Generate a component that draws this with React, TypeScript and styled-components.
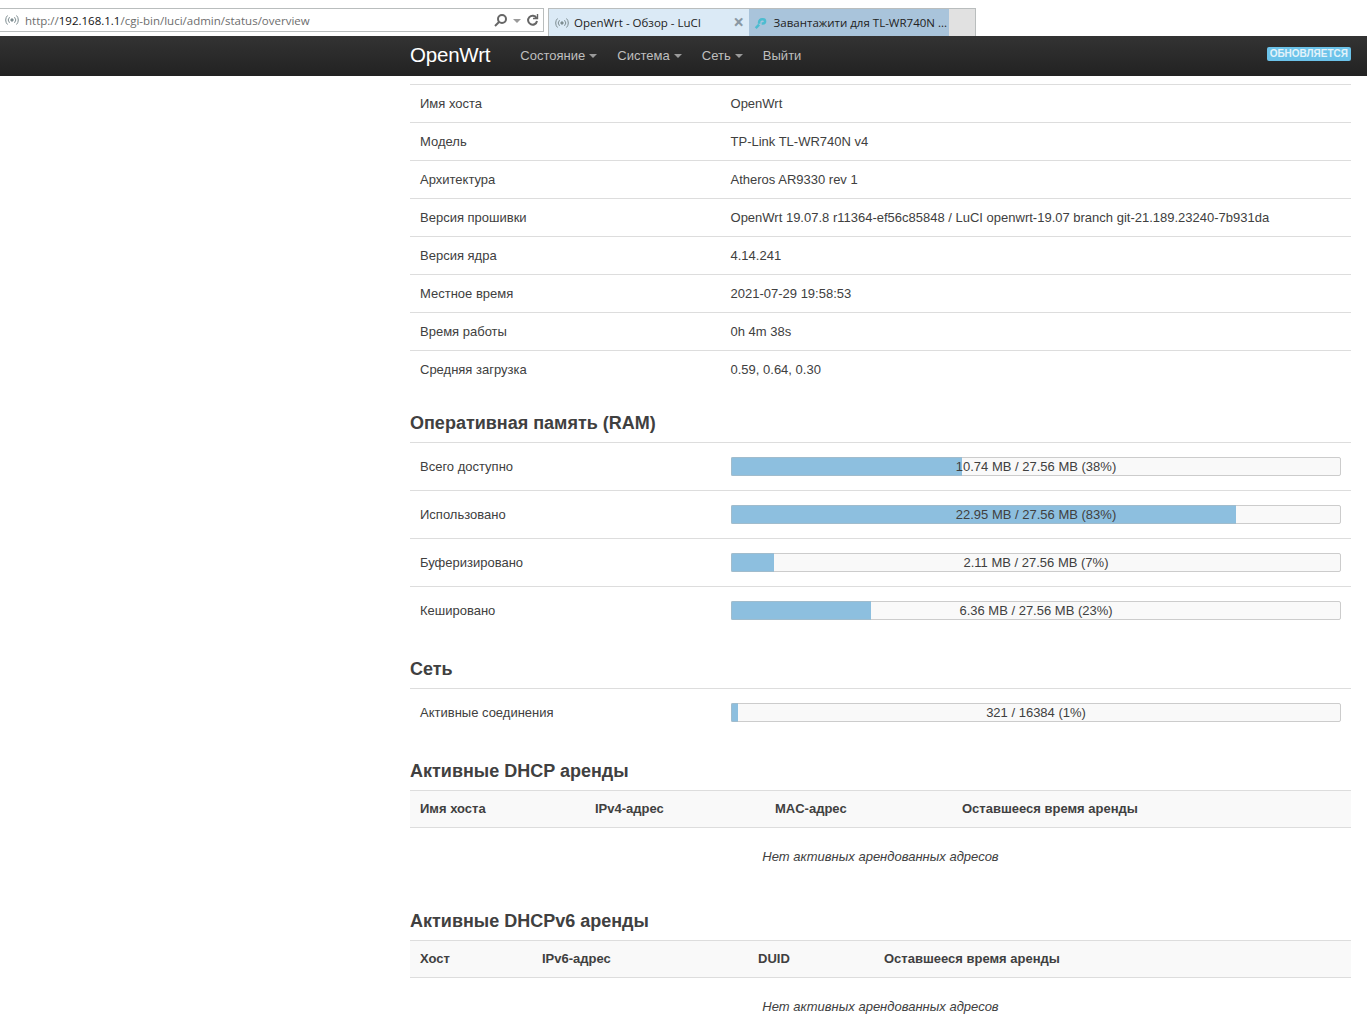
import React from "react";
import styled, { createGlobalStyle } from "styled-components";

const GlobalStyle = createGlobalStyle`
    html, body {
        margin: 0;
        padding: 0;
        background: #fff;
        overflow: hidden;
    }

    body {
        height: 1018px;
        color: #404040;
        font-family: "Liberation Sans", Arial, sans-serif;
        font-size: 13px;
    }

    * {
        box-sizing: border-box;
    }
`;

const ChromeBar = styled.div`
    height: 36px;
    display: flex;
    align-items: flex-end;
    background: #fff;
`;

const AddressBox = styled.div`
    width: 544px;
    height: 24px;
    margin-bottom: 4px;
    padding: 0 4px;
    display: flex;
    align-items: center;
    gap: 5px;
    border: 1px solid #b9bdbd;
    border-left: none;
    font-family: "Open Sans", sans-serif;
    font-size: 11.5px;
    color: #6d6d6d;
`;

const UrlHost = styled.span`
    color: #111;
`;

const Url = styled.div`
    flex: 1;
    white-space: nowrap;
`;

const AddressTools = styled.div`
    display: flex;
    align-items: center;
    gap: 5px;
    color: #666;
`;

const TabStrip = styled.div`
    margin-left: 4px;
    width: 428px;
    height: 28px;
    display: flex;
    background: #e1e1e1;
    border: 1px solid #b9bdbd;
    border-bottom: none;
`;

const Tab = styled.div<{ $active?: boolean }>`
    height: 100%;
    width: 200px;
    padding: 0 2px 0 5px;
    display: flex;
    align-items: center;
    gap: ${({ $active }) => ($active ? "4px" : "6px")};
    font-family: "Open Sans", sans-serif;
    font-size: 11.5px;
    white-space: nowrap;
    color: #222;
    background: ${({ $active }) => ($active ? "#dbeaf6" : "#a9c4db")};
`;

const TabTitle = styled.span`
    flex: 1;
`;

const CloseMark = styled.span`
    color: #8a98a3;
    font-size: 19px;
    font-weight: 700;
    line-height: 1;
    margin-right: 3px;
`;

const Navbar = styled.header`
    height: 40px;
    padding: 0 16px 2px 410px;
    display: flex;
    align-items: center;
    background: linear-gradient(#333, #222);
`;

const Brand = styled.a`
    color: #fff;
    font-size: 20.5px;
    margin-right: 30px;
    letter-spacing: -0.2px;
`;

const NavLink = styled.a`
    display: flex;
    align-items: center;
    gap: 4px;
    color: #bfbfbf;
    font-size: 13px;
    margin-right: 20px;
    letter-spacing: 0.02px;
`;

const Caret = styled.span`
    width: 0;
    height: 0;
    margin-top: 1px;
    border-left: 4px solid transparent;
    border-right: 4px solid transparent;
    border-top: 4px solid #9a9a9a;
`;

const Badge = styled.span`
    margin-left: auto;
    margin-top: -2px;
    padding: 1px 3px;
    background: #6cc3ea;
    border-radius: 2px;
    color: #e4f3fa;
    font-size: 10px;
    font-weight: 700;
    line-height: 12px;
`;

const Content = styled.main`
    padding: 8px 16px 0 410px;
`;

const Row = styled.div<{ $tall?: boolean }>`
    height: ${({ $tall }) => ($tall ? "48px" : "38px")};
    display: grid;
    grid-template-columns: 33% 1fr;
    align-items: center;
    border-top: 1px solid #ddd;
`;

const Label = styled.div`
    padding-left: 10px;
    color: #404040;
`;

const Value = styled.div`
    padding-left: 10px;
    color: #404040;
`;

const Section = styled.section`
    margin-top: 24px;
`;

const Heading = styled.h2`
    margin: 0;
    height: 30px;
    color: #404040;
    font-size: 18px;
    font-weight: 700;
    line-height: 22px;
`;

const BarValue = styled.div`
    padding: 0 10px 0 10.5px;
`;

const Progress = styled.div`
    position: relative;
    height: 19px;
    background: #f9f9f9;
    border: 1px solid #ccc;
    border-radius: 2px;
    text-align: center;
    line-height: 17px;
    color: #404040;
`;

const ProgressFill = styled.div`
    position: absolute;
    top: -1px;
    bottom: -1px;
    left: -1px;
    background: #8dbfdf;
    border: 1px solid #a0bccd;
    border-right: none;
    border-radius: 2px 0 0 2px;
`;

const ProgressText = styled.span`
    position: relative;
`;

const LeaseHead = styled.div<{ $columns: string }>`
    height: 38px;
    padding: 0 0 2px 10px;
    display: grid;
    grid-template-columns: ${({ $columns }) => $columns};
    align-items: center;
    background: #f9f9f9;
    border-top: 1px solid #ddd;
    border-bottom: 1px solid #ddd;
    font-weight: 700;
    color: #404040;
`;

const EmptyNote = styled.div`
    height: 58px;
    padding-bottom: 2px;
    display: flex;
    align-items: center;
    justify-content: center;
    font-style: italic;
    color: #404040;
`;

const SignalIcon = ({ color }: { color: string }) => (
    <svg width="16" height="16" viewBox="0 0 16 16" fill="none" stroke={color} strokeWidth="1">
        <circle cx="8" cy="8" r="1.2" fill={color} />
        <path d="M5.5 5.2a4 4 0 0 0 0 5.6M10.5 5.2a4 4 0 0 1 0 5.6" />
        <path d="M3.5 3.5a6.5 6.5 0 0 0 0 9M12.5 3.5a6.5 6.5 0 0 1 0 9" />
    </svg>
);

const SearchIcon = () => (
    <svg width="15" height="15" viewBox="0 0 15 15" fill="none" stroke="#666" strokeWidth="2">
        <circle cx="9" cy="6" r="4" />
        <path d="M6 9l-4 4" />
    </svg>
);

const ReloadIcon = () => (
    <svg width="13" height="14" viewBox="0 0 13 14" fill="none" stroke="#666" strokeWidth="2">
        <path d="M10.5 5a4.5 4.5 0 1 0 .5 3" />
        <path d="M11.5 1v4.5H7" strokeWidth="1.4" />
    </svg>
);

const TpLinkIcon = () => (
    <svg width="16" height="16" viewBox="0 0 16 16" fill="none" stroke="#4dbcd0" strokeWidth="3">
        <path d="M2 14l4-4M6 9l0-2a3.5 3.5 0 0 1 3.5-3.5h1a2.5 2.5 0 0 1 0 5H9" />
    </svg>
);

const systemInfo = [
    ["Имя хоста", "OpenWrt"],
    ["Модель", "TP-Link TL-WR740N v4"],
    ["Архитектура", "Atheros AR9330 rev 1"],
    ["Версия прошивки", "OpenWrt 19.07.8 r11364-ef56c85848 / LuCI openwrt-19.07 branch git-21.189.23240-7b931da"],
    ["Версия ядра", "4.14.241"],
    ["Местное время", "2021-07-29 19:58:53"],
    ["Время работы", "0h 4m 38s"],
    ["Средняя загрузка", "0.59, 0.64, 0.30"],
];

const memory = [
    { label: "Всего доступно", text: "10.74 MB / 27.56 MB (38%)", percent: 38 },
    { label: "Использовано", text: "22.95 MB / 27.56 MB (83%)", percent: 83 },
    { label: "Буферизировано", text: "2.11 MB / 27.56 MB (7%)", percent: 7 },
    { label: "Кешировано", text: "6.36 MB / 27.56 MB (23%)", percent: 23 },
];

const BarRow = ({ label, text, percent }: { label: string; text: string; percent: number }) => (
    <Row $tall>
        <Label>{label}</Label>
        <BarValue>
            <Progress>
                <ProgressFill style={{ width: `${percent}%` }} />
                <ProgressText>{text}</ProgressText>
            </Progress>
        </BarValue>
    </Row>
);

const LeaseTable = ({ columns, titles }: { columns: string; titles: string[] }) => (
    <>
        <LeaseHead $columns={columns}>
            {titles.map((title) => (
                <div key={title}>{title}</div>
            ))}
        </LeaseHead>
        <EmptyNote>Нет активных арендованных адресов</EmptyNote>
    </>
);

export default function App() {
    return (
        <>
            <GlobalStyle />
            <ChromeBar>
                <AddressBox>
                    <SignalIcon color="#7d8c90" />
                    <Url>
                        http://<UrlHost>192.168.1.1</UrlHost>/cgi-bin/luci/admin/status/overview
                    </Url>
                    <AddressTools>
                        <SearchIcon />
                        <Caret />
                        <ReloadIcon />
                    </AddressTools>
                </AddressBox>
                <TabStrip>
                    <Tab $active>
                        <SignalIcon color="#7d8c90" />
                        <TabTitle>OpenWrt - Обзор - LuCI</TabTitle>
                        <CloseMark>×</CloseMark>
                    </Tab>
                    <Tab>
                        <TpLinkIcon />
                        <TabTitle>Завантажити для TL-WR740N ...</TabTitle>
                    </Tab>
                </TabStrip>
            </ChromeBar>

            <Navbar>
                <Brand>OpenWrt</Brand>
                <NavLink>Состояние <Caret /></NavLink>
                <NavLink>Система <Caret /></NavLink>
                <NavLink>Сеть <Caret /></NavLink>
                <NavLink>Выйти</NavLink>
                <Badge>ОБНОВЛЯЕТСЯ</Badge>
            </Navbar>

            <Content>
                {systemInfo.map(([label, value]) => (
                    <Row key={label}>
                        <Label>{label}</Label>
                        <Value>{value}</Value>
                    </Row>
                ))}

                <Section>
                    <Heading>Оперативная память (RAM)</Heading>
                    {memory.map((item) => (
                        <BarRow key={item.label} {...item} />
                    ))}
                </Section>

                <Section>
                    <Heading>Сеть</Heading>
                    <BarRow label="Активные соединения" text="321 / 16384 (1%)" percent={1.1} />
                </Section>

                <Section>
                    <Heading>Активные DHCP аренды</Heading>
                    <LeaseTable
                        columns="175px 180px 187px 1fr"
                        titles={["Имя хоста", "IPv4-адрес", "MAC-адрес", "Оставшееся время аренды"]}
                    />
                </Section>

                <Section>
                    <Heading>Активные DHCPv6 аренды</Heading>
                    <LeaseTable
                        columns="122px 216px 126px 1fr"
                        titles={["Хост", "IPv6-адрес", "DUID", "Оставшееся время аренды"]}
                    />
                </Section>
            </Content>
        </>
    );
}
